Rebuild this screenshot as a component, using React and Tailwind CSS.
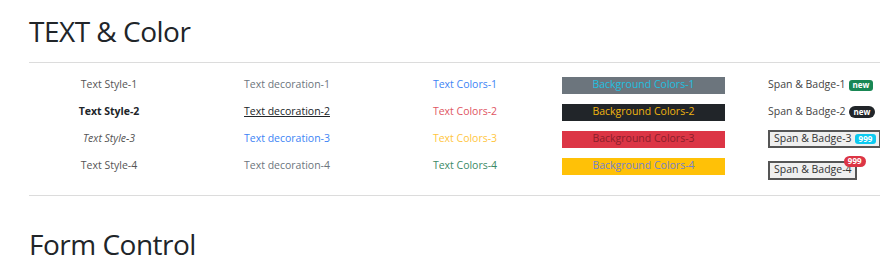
import React from 'react';

const rows = [
    {
        style: <span className="text-[#555]">Text Style-1</span>,
        deco: <span className="text-[#6c757d]">Text decoration-1</span>,
        color: <span className="text-[#3d84f5]">Text Colors-1</span>,
        bg: <div className="h-[17px] w-full bg-[#6c757d] text-[#20c0e0] flex items-center justify-center">Background Colors-1</div>,
        badge: (
            <div className="flex items-center text-[#444]">
                Span &amp; Badge-1
                <span className="ml-[3px] px-[4px] h-[11px] flex items-center rounded-[3px] bg-[#198754] text-white text-[8px] font-bold">new</span>
            </div>
        ),
    },
    {
        style: <span className="font-bold text-[#212529]">Text Style-2</span>,
        deco: <span className="underline text-[#212529]">Text decoration-2</span>,
        color: <span className="text-[#e05562]">Text Colors-2</span>,
        bg: <div className="h-[17px] w-full bg-[#212529] text-[#f0b410] flex items-center justify-center">Background Colors-2</div>,
        badge: (
            <div className="flex items-center text-[#444]">
                Span &amp; Badge-2
                <span className="ml-[3px] px-[5px] h-[12px] flex items-center rounded-full bg-[#212529] text-white text-[8px] font-bold">new</span>
            </div>
        ),
    },
    {
        style: <span className="italic text-[#555]">Text Style-3</span>,
        deco: <span className="text-[#3d84f5]">Text decoration-3</span>,
        color: <span className="text-[#ffc640]">Text Colors-3</span>,
        bg: <div className="h-[17px] w-full bg-[#dc3545] text-[#8a1f2b] flex items-center justify-center">Background Colors-3</div>,
        badge: (
            <div className="flex items-center h-[18px] pl-[4px] pr-[3px] border-2 border-[#555] bg-[#efefef] text-[#333] whitespace-nowrap">
                Span &amp; Badge-3
                <span className="ml-[3px] px-[4px] h-[10px] flex items-center rounded-[3px] bg-[#0dcaf0] text-white text-[8px] font-bold">999</span>
            </div>
        ),
    },
    {
        style: <span className="text-[#555]">Text Style-4</span>,
        deco: <span className="text-[#6c757d]">Text decoration-4</span>,
        color: <span className="text-[#3a8a66]">Text Colors-4</span>,
        bg: <div className="h-[17px] w-full bg-[#ffc107] text-[#7482cc] flex items-center justify-center">Background Colors-4</div>,
        badge: (
            <div className="relative mt-[8px] flex items-center h-[19px] pl-[4px] pr-[3px] border-2 border-[#555] bg-[#efefef] text-[#333] whitespace-nowrap">
                Span &amp; Badge-4
                <span className="absolute right-[-11px] top-[-7px] px-[4px] h-[11px] flex items-center rounded-full bg-[#dc3545] text-white text-[8px] font-bold">999</span>
            </div>
        ),
    },
];

export default function App() {
    return (
        <div className="w-[880px] h-[274px] overflow-hidden bg-white text-[#212529]" style={{ fontFamily: '"Open Sans", "Noto Sans", sans-serif' }}>
            <h2 className="pt-[15px] pl-[29px] text-[28px] tracking-[-0.5px] leading-[1.2] font-normal text-[#212529]">TEXT &amp; Color</h2>
            <div className="ml-[29px] mt-[13px] border-t border-[#dcdcdc]"></div>

            {/* table of styles */}
            <div className="pt-[9px] pl-[20px] text-[10.5px]">
                {rows.map((r, i) => (
                    <div key={i} className="grid grid-cols-[178px_178px_178px_178px_178px] h-[27px] items-center">
                        <div className="flex justify-center">{r.style}</div>
                        <div className="flex justify-center">{r.deco}</div>
                        <div className="flex justify-center">{r.color}</div>
                        <div className="flex justify-center pl-[8px] pr-[7px]">{r.bg}</div>
                        <div className="flex justify-start pl-[36px]">{r.badge}</div>
                    </div>
                ))}
            </div>

            <div className="ml-[29px] mt-[15px] border-t border-[#dcdcdc]"></div>
            <h2 className="pt-[32px] pl-[29px] text-[28px] tracking-[-0.5px] leading-[1.2] font-normal text-[#212529]">Form Control</h2>
        </div>
    );
}
